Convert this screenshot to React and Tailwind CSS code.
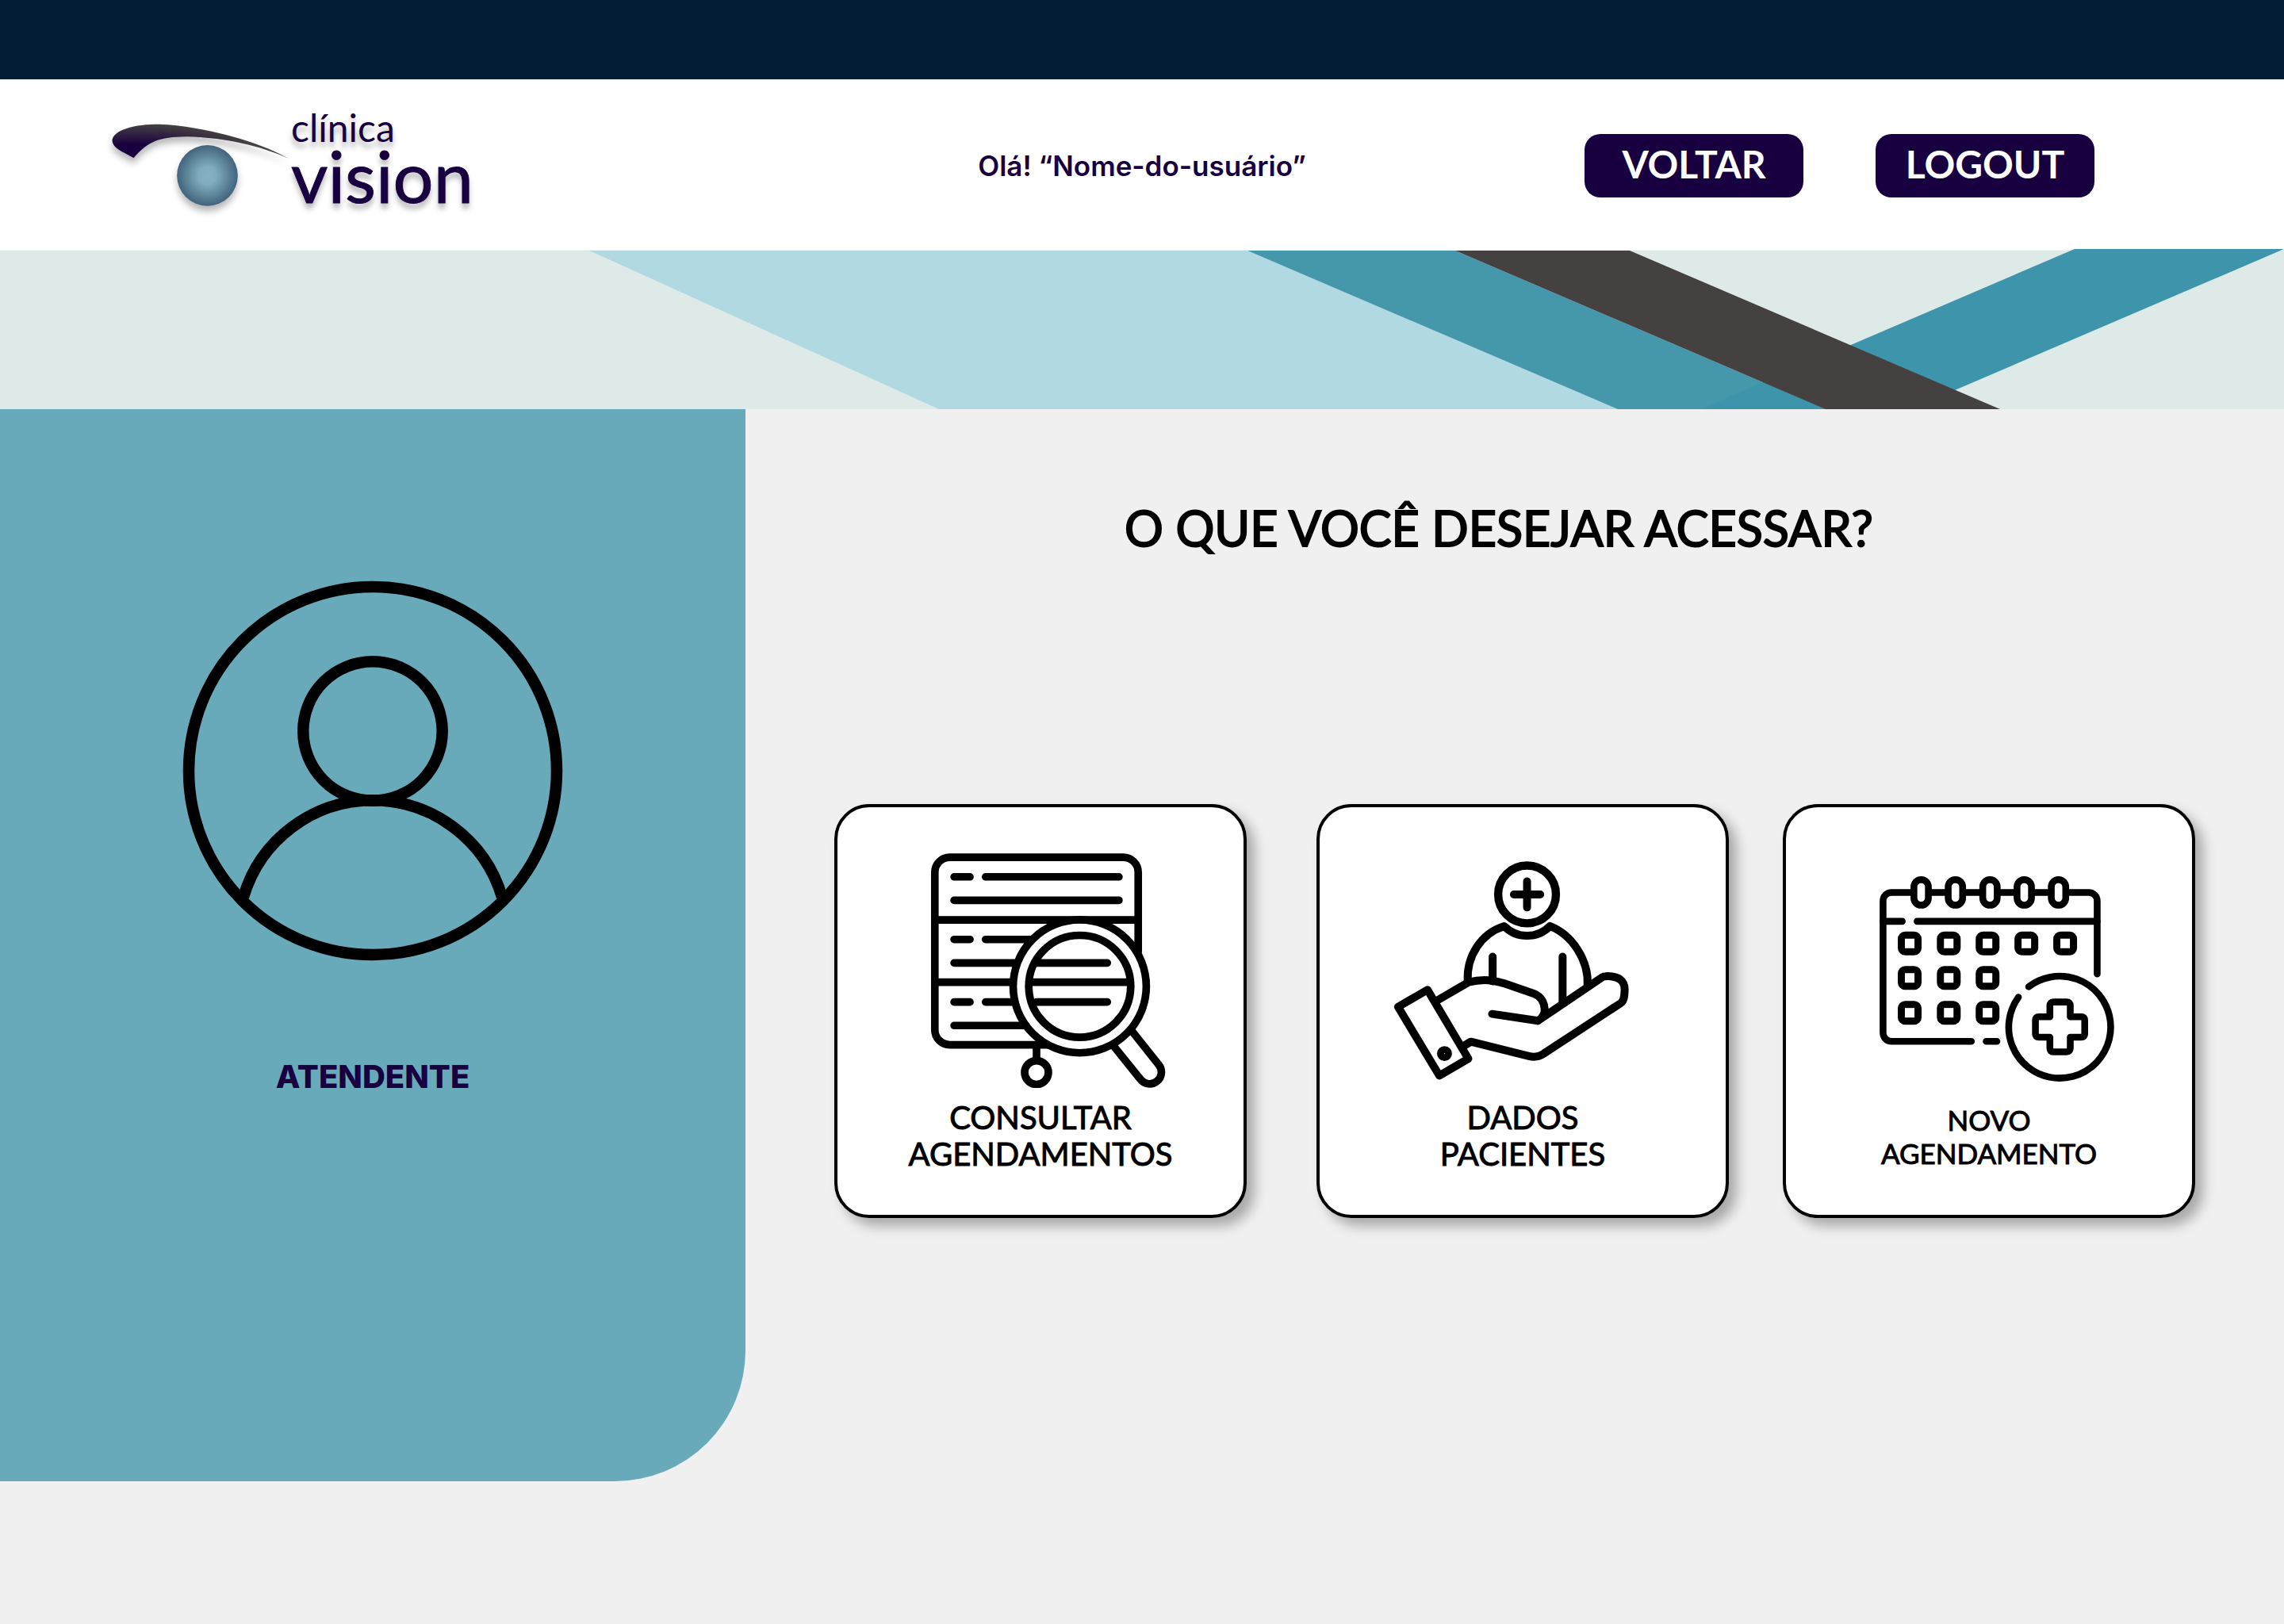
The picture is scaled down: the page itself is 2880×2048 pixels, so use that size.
import React from "react";

const ink = { fill: "none", stroke: "#000", strokeLinecap: "round", strokeLinejoin: "round" };

function Logo() {
  return (
    <a href="#inicio" aria-label="clínica vision" className="flex items-start pl-[140px] text-[#180040]">
      <svg
        viewBox="60 150 680 420"
        className="mt-1 h-[140px] w-[227px] overflow-visible drop-shadow-[0_7px_4px_rgba(0,0,0,0.28)]"
        aria-hidden="true"
      >
        <defs>
          <radialGradient id="brow" gradientUnits="userSpaceOnUse" cx="0" cy="0" r="1" gradientTransform="translate(150 292) scale(440 95)">
            <stop offset="0.2" stopColor="#180040" />
            <stop offset="1" stopColor="#454041" />
          </radialGradient>
          <radialGradient id="iris">
            <stop offset="0" stopColor="#85b2c2" />
            <stop offset="0.3" stopColor="#7fabbc" />
            <stop offset="1" stopColor="#41647c" />
          </radialGradient>
        </defs>
        <path
          fill="url(#brow)"
          d="M730 326C640 275 500 232 360 209C310 201 270 197 225 197C130 199 67 224 64 258C66 290 105 300 145 325C200 262 240 245 345 244C480 246 620 276 730 326Z"
        />
        <circle cx="424" cy="391" r="115" fill="url(#iris)" />
      </svg>
      <span className="flex flex-col font-['Lato'] [text-shadow:0_7px_7px_rgba(0,0,0,0.3)]">
        <span className="text-[48px] leading-[48px]">clínica</span>
        <span className="text-[90px] leading-[72px] [-webkit-text-stroke:1px_#180040]">vision</span>
      </span>
    </a>
  );
}

function Banner() {
  return (
    <svg viewBox="0 0 2880 202" preserveAspectRatio="none" className="-mt-0.5 block h-[202px] w-full" aria-hidden="true">
      <rect y="2" width="2880" height="200" fill="#deeae7" />
      <path d="M2616 0H2880L2409 202H2145Z" fill="#3e95ab" />
      <path d="M743 2H1573L2040 202H1184Z" fill="#b0d9e2" />
      <path d="M1573 2H1835L2302 202H2040Z" fill="#4597ac" />
      <path d="M2240 161L2302 202H2145Z" fill="#3e95ab" />
      <path d="M1835 2H2055L2522 202H2302Z" fill="#464141" />
    </svg>
  );
}

function Avatar() {
  return (
    <svg viewBox="0 0 480 480" className="size-[480px]" fill="none" stroke="#000" strokeWidth="14.500" aria-hidden="true">
      <circle cx="240" cy="240" r="232" />
      <circle cx="240" cy="190" r="87.700" />
      <path d="M77 399A170 170 0 0 1 403 399" />
    </svg>
  );
}

function ScheduleSearchIcon() {
  return (
    <svg viewBox="300 213 924 828" className="h-[296px] w-[330px]" {...ink} strokeWidth="27" aria-hidden="true">
      <path d="M790 889H442A53 53 0 0 1 389 836V280A53 53 0 0 1 442 227H1054A53 53 0 0 1 1107 280V560" />
      <path d="M389 448H1107M389 668H660M735 668H1078" />
      <path d="M457 296H513M568 296H1039M457 379H1039M457 517H513M568 517H730M457 600H675M750 600H998M457 738H513M568 738H665M748 738H998M457 821H710" />
      <circle cx="900.500" cy="682.500" r="207.500" stroke="#fff" strokeWidth="30" />
      <circle cx="900.500" cy="682.500" r="180" />
      <circle cx="900.500" cy="682.500" r="235" />
      <path d="M748 895V940" />
      <circle cx="748" cy="987" r="42" />
      <path d="M1020 893L1115 1011A41 41 0 0 0 1180 960L1086 842" />
    </svg>
  );
}

function PatientCareIcon() {
  return (
    <svg viewBox="294 213 924 828" className="h-[296px] w-[330px]" {...ink} strokeWidth="28" aria-hidden="true">
      <circle cx="771.500" cy="358" r="102" strokeWidth="29" />
      <path d="M771.500 312V404M725 358H818" />
      <path d="M562 662C558 575 610 495 691 470C735 515 808 515 852 470C930 500 990 590 985 680" />
      <path d="M650 578V665M897 578V740" />
      <path d="M455 732L565 668C620 654 655 662 690 672L795 708C825 720 836 745 833 775Q826 795 810 804L1038 650Q1042 647 1048 647C1095 645 1118 662 1116 698C1115 722 1112 736 1102 742L829 921Q808 936 778 929L573 878L550 892" />
      <path d="M648 780L810 804" />
      <path d="M420 695L316 755L462 998L564 938Z" />
      <circle cx="480" cy="920" r="14" strokeWidth="25" />
    </svg>
  );
}

const rings = [539, 660, 782, 903, 1024];
const days = [
  [498, 531], [636, 531], [773, 531], [910, 531], [1047, 531],
  [498, 653], [636, 653], [773, 653],
  [498, 776], [636, 776], [773, 776],
];

function NewAppointmentIcon() {
  return (
    <svg viewBox="316 213 924 828" className="h-[296px] w-[330px]" {...ink} strokeWidth="24" aria-hidden="true">
      <path d="M716 877H434A30 30 0 0 1 404 847V381A30 30 0 0 1 434 351H1130A30 30 0 0 1 1160 381V639M768 877H806" />
      <path d="M404 453H472M524 453H1160" />
      {rings.map((x) => (
        <rect key={x} x={x - 26} y="306" width="51" height="90" rx="25" fill="#fff" />
      ))}
      {days.map(([x, y]) => (
        <rect key={x + "-" + y} x={x - 30} y={y - 30} width="60" height="60" rx="14" />
      ))}
      {days.map(([x, y]) => (
        <rect key={x + "/" + y} x={x - 19} y={y - 19} width="38" height="38" strokeWidth="4" strokeLinejoin="miter" />
      ))}
      <path d="M918 684A180 180 0 1 1 882 721" />
      <path d="M1005 738H1052Q1065 738 1065 751V790H1104Q1116 790 1116 802V850Q1116 862 1104 862H1065V901Q1065 914 1052 914H1005Q993 914 993 901V862H954Q942 862 942 850V802Q942 790 954 790H993V751Q993 738 1005 738Z" />
    </svg>
  );
}

function Card({ icon, lines, className, textClass }) {
  return (
    <button
      type="button"
      className={
        "flex min-h-[522px] w-[520px] flex-col items-center rounded-[44px] border-4 border-black bg-white pt-[58px] font-['Lato'] text-black shadow-[10px_10px_16px_rgba(0,0,0,0.3)] [-webkit-text-stroke:1px_black] " +
        className
      }
    >
      {icon}
      <span className={"flex flex-col text-center " + textClass}>
        {lines.map((line) => (
          <span key={line}>{line}</span>
        ))}
      </span>
    </button>
  );
}

function HeaderButton({ children }) {
  return (
    <button type="button" className="h-20 w-[276px] rounded-[20px] bg-[#180040] pb-1 font-['Lato'] text-[48px] font-bold leading-[56px] text-white">
      {children}
    </button>
  );
}

export default function App() {
  return (
    <div className="flex min-h-screen flex-col bg-[#f0f0f0]">
      <div className="h-[100px] bg-[#031d37]" />
      <header className="grid min-h-[216px] grid-cols-[1fr_auto_1fr] items-center border-b border-t-2 border-[#f3f4f4] bg-white">
        <Logo />
        <p className="font-['Inter'] text-[35px] font-semibold leading-[44px] text-[#180040]">Olá! “Nome-do-usuário”</p>
        <nav className="flex justify-end gap-[91px] pr-[239px]">
          <HeaderButton>VOLTAR</HeaderButton>
          <HeaderButton>LOGOUT</HeaderButton>
        </nav>
      </header>
      <Banner />
      <div className="grid grid-cols-[47fr_97fr] items-start">
        <aside className="flex flex-col items-center rounded-br-[165px] bg-[#68aaba] pb-[486px] pt-[216px]">
          <Avatar />
          <p className="mt-[122px] font-['Inter'] text-[40px] font-extrabold leading-[48px] text-[#180040]">ATENDENTE</p>
        </aside>
        <main className="flex flex-col items-center pt-[112px]">
          <h1 className="pr-10 font-['Lato'] text-[61px] leading-[76px] text-black [-webkit-text-stroke:2px_black]">O QUE VOCÊ DESEJAR ACESSAR?</h1>
          <div className="mt-[310px] flex justify-center gap-[68px]">
            <Card
              className="mr-5"
              icon={<ScheduleSearchIcon />}
              lines={["CONSULTAR", "AGENDAMENTOS"]}
              textClass="mt-[14px] text-[40px] leading-[46px]"
            />
            <Card
              className=""
              icon={<PatientCareIcon />}
              lines={["DADOS", "PACIENTES"]}
              textClass="mt-[14px] text-[40px] leading-[46px]"
            />
            <Card
              className=""
              icon={<NewAppointmentIcon />}
              lines={["NOVO", "AGENDAMENTO"]}
              textClass="mt-[19px] text-[35px] leading-[42px]"
            />
          </div>
        </main>
      </div>
    </div>
  );
}
